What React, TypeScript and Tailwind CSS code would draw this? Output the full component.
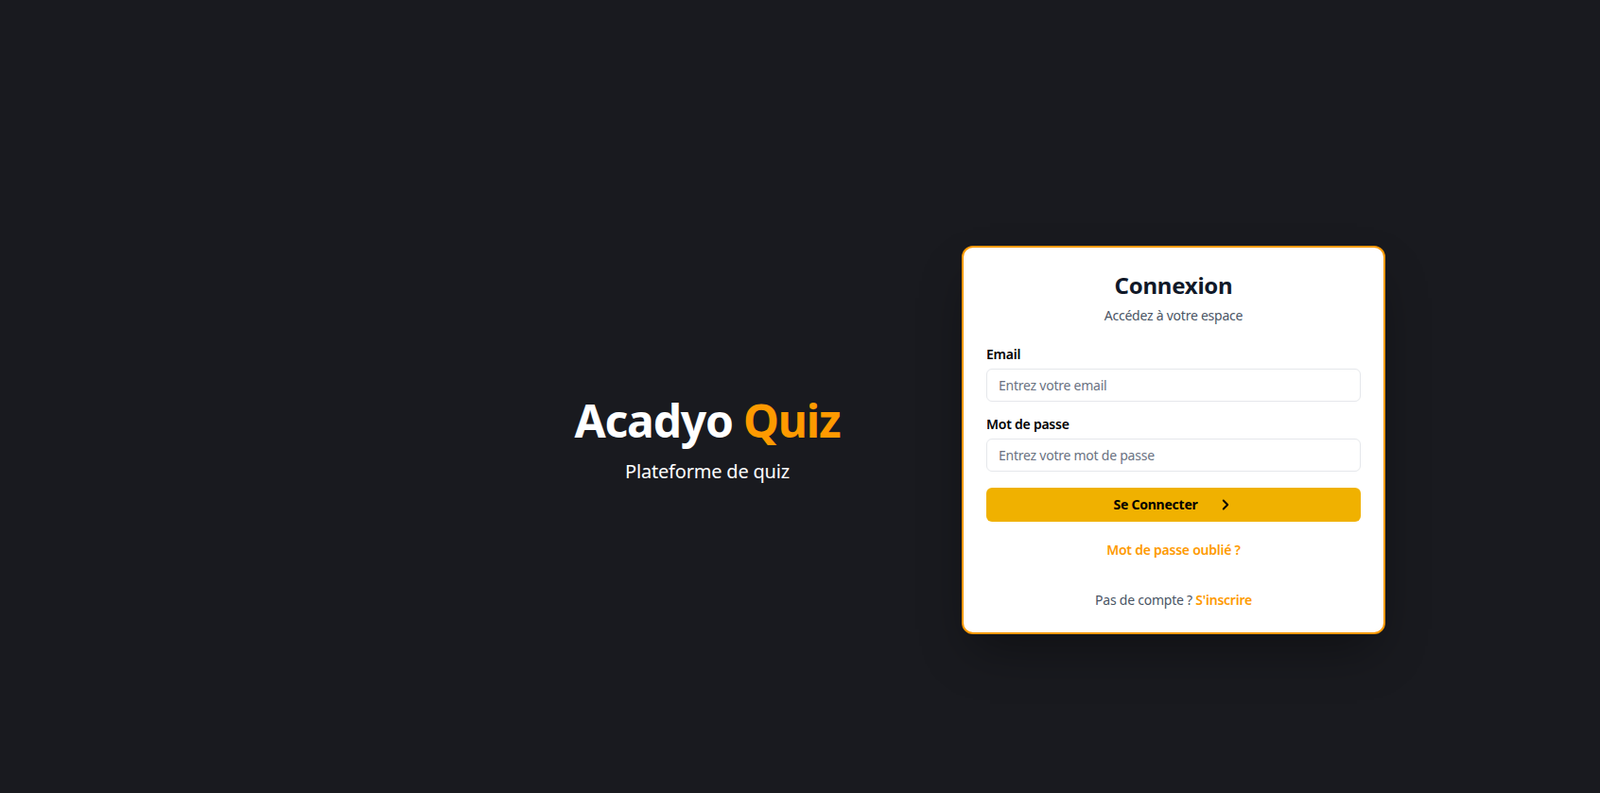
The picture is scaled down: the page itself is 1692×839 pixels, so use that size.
import React from "react";

export default function App() {
  return (
    <div
      className="min-h-screen w-full bg-[#191a1f] flex items-center pt-[92px]"
      style={{ fontFamily: '"Noto Sans", "Open Sans", sans-serif' }}
    >
      <div className="w-[400px] ml-[548px] mt-[2px] text-center">
        <h1 className="text-5xl font-bold text-white leading-none tracking-tight">
          Acadyo <span className="text-[#fe9a00]">Quiz</span>
        </h1>
        <p className="mt-4 text-xl text-white tracking-[-0.01em]">Plateforme de quiz</p>
      </div>
      <div className="ml-[69px] w-[448px] bg-white border-2 border-[#fe9a00] rounded-xl shadow-2xl shadow-black/40 p-6 tracking-[-0.015em]">
        <h2 className="text-center text-2xl font-bold text-[#101828]">Connexion</h2>
        <p className="text-center text-sm text-[#4a5565] mt-1.5">Accédez à votre espace</p>
        <div className="mt-[21px]">
          <label className="block text-sm font-semibold text-black mb-[5px]">Email</label>
          <input
            type="email"
            placeholder="Entrez votre email"
            className="w-full h-[35px] px-3 text-sm border border-gray-200 rounded-md placeholder:text-[#6a7282] outline-none"
          />
        </div>
        <div className="mt-[14px]">
          <label className="block text-sm font-semibold text-black mb-[5px]">Mot de passe</label>
          <input
            type="password"
            placeholder="Entrez votre mot de passe"
            className="w-full h-[35px] px-3 text-sm border border-gray-200 rounded-md placeholder:text-[#6a7282] outline-none"
          />
        </div>
        <button className="mt-[17px] w-full h-9 rounded-md bg-[#f0b100] flex items-center justify-center gap-5 text-sm font-bold text-black">
          <span>Se Connecter</span>
          <svg width="18" height="18" viewBox="0 0 24 24" fill="none" stroke="currentColor" strokeWidth="2.5" strokeLinecap="round" strokeLinejoin="round">
            <path d="m9 18 6-6-6-6" />
          </svg>
        </button>
        <div className="mt-[19px] text-center leading-5">
          <a className="text-sm font-semibold text-[#fe9a00]">Mot de passe oublié ?</a>
        </div>
        <p className="mt-[33px] text-center text-sm text-[#4a5565]">
          Pas de compte ? <a className="font-semibold text-[#fe9a00]">S'inscrire</a>
        </p>
      </div>
    </div>
  );
}
